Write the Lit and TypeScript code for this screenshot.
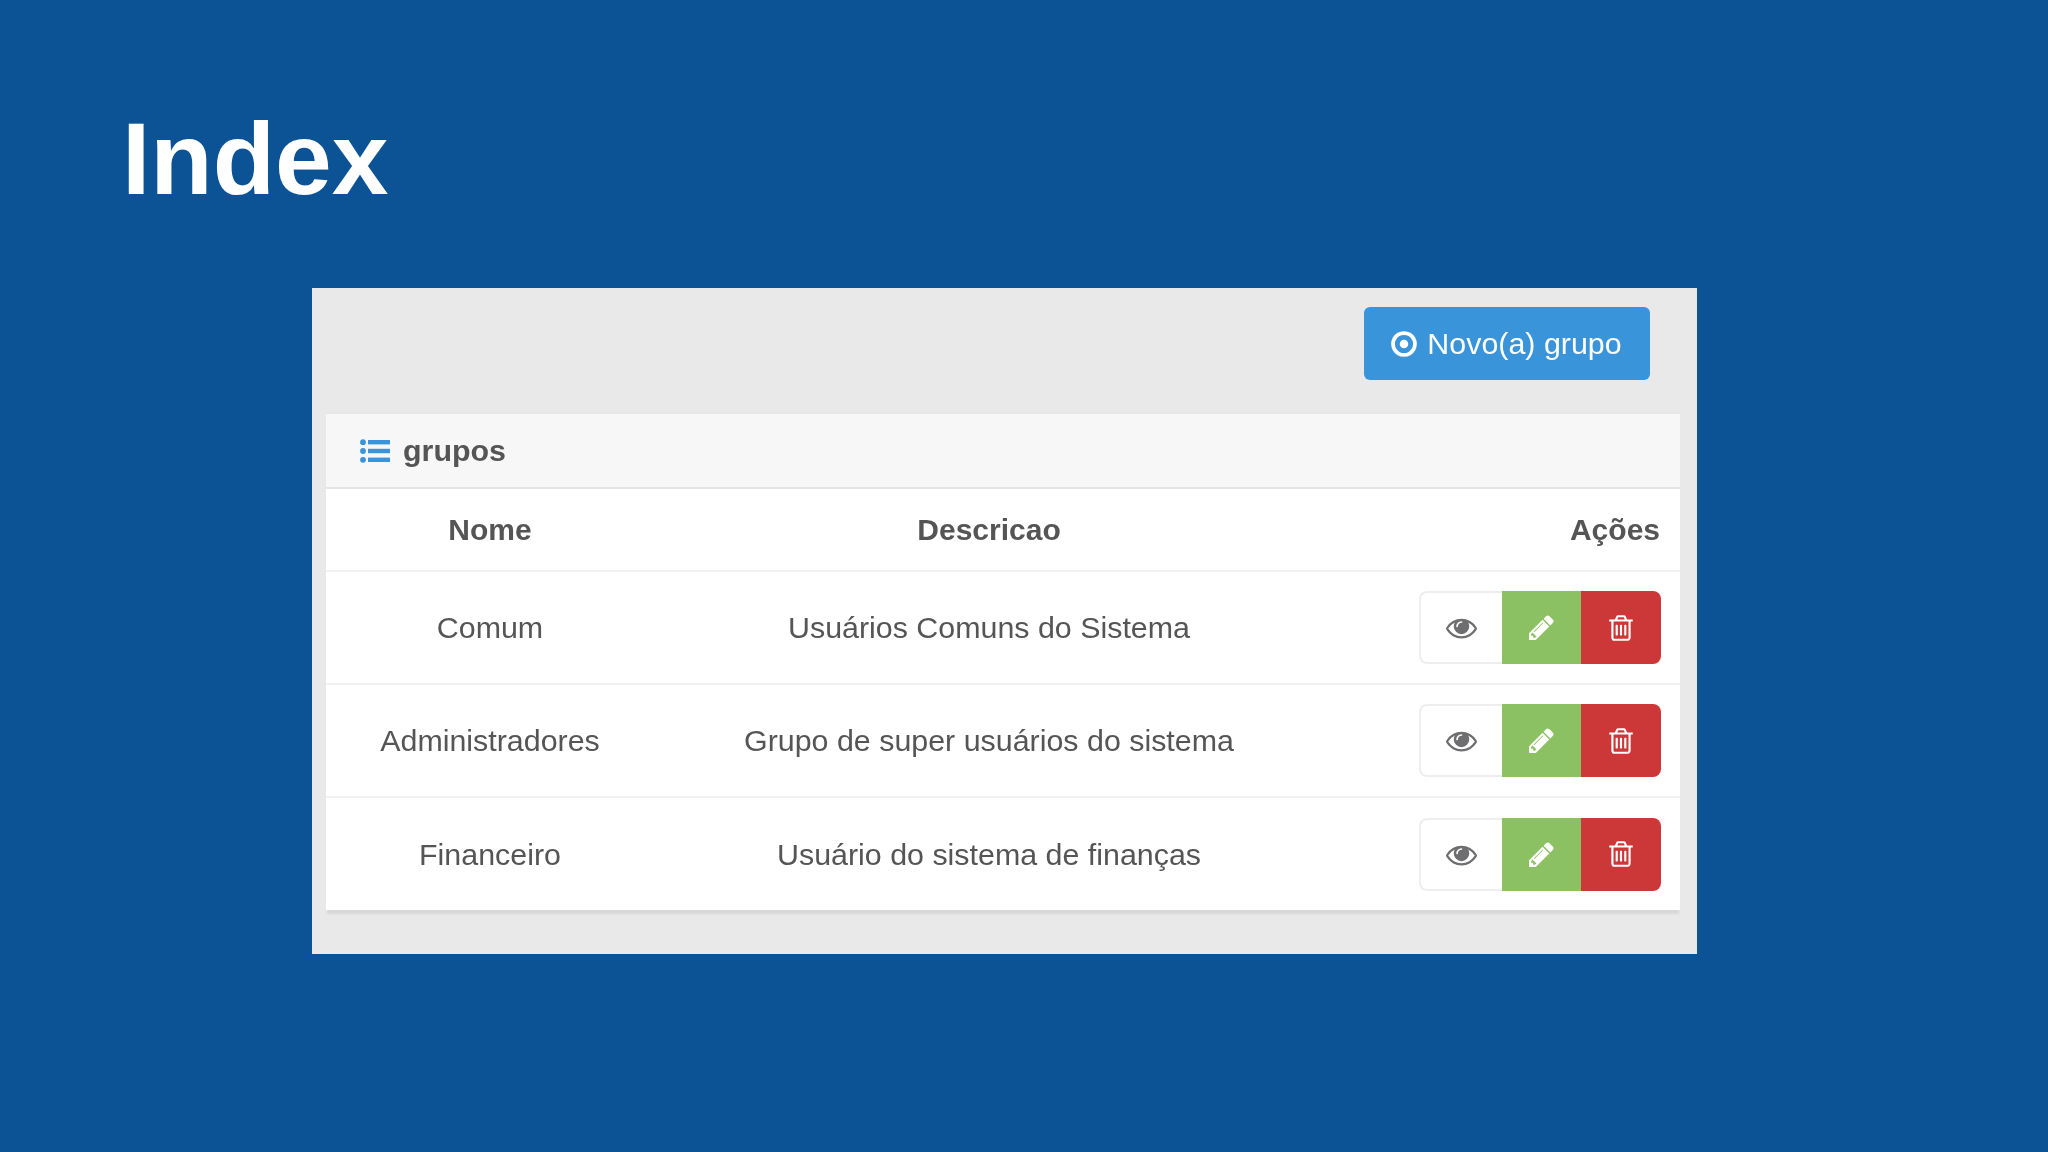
import { LitElement, html, css, svg } from "lit";
import { customElement } from "lit/decorators.js";

const icon = (d: string, cls: string) => html`<svg class="ic ${cls}" viewBox="0 0 1792 1792" fill="currentColor">${svg`<path d=${d}></path>`}</svg>`;
const EYE = "M1664 960q-152-236-381-353 61 104 61 225 0 185-131.500 316.500t-316.500 131.500-316.500-131.500-131.500-316.500q0-121 61-225-229 117-381 353 133 205 333.500 326.500t434.500 121.500 434.500-121.500 333.500-326.500zm-720-384q0-20-14-34t-34-14q-125 0-214.500 89.500t-89.500 214.500q0 20 14 34t34 14 34-14 14-34q0-86 61-147t147-61q20 0 34-14t14-34zm848 384q0 34-20 69-140 230-376.500 368.500t-499.500 138.500-499.500-139-376.500-368q-20-35-20-69t20-69q140-229 376.500-368t499.500-139 499.500 139 376.500 368q20 35 20 69z";
const PENCIL = "M491 1536l91-91-235-235-91 91v107h128v128h107zm523-928q0-22-22-22-10 0-17 7l-542 542q-7 7-7 17 0 22 22 22 10 0 17-7l542-542q7-7 7-17zm-54-192l416 416-832 832h-416v-416zm683 96q0 53-37 90l-166 166-416-416 166-165q36-38 90-38 53 0 91 38l235 234q37 39 37 91z";
const TRASH = "M704 736v576q0 14-9 23t-23 9h-64q-14 0-23-9t-9-23v-576q0-14 9-23t23-9h64q14 0 23 9t9 23zm256 0v576q0 14-9 23t-23 9h-64q-14 0-23-9t-9-23v-576q0-14 9-23t23-9h64q14 0 23 9t9 23zm256 0v576q0 14-9 23t-23 9h-64q-14 0-23-9t-9-23v-576q0-14 9-23t23-9h64q14 0 23 9t9 23zm128 724v-948h-896v948q0 22 7 40.500t14.500 27 10.500 8.500h832q3 0 10.500-8.500t14.500-27 7-40.500zm-672-1076h448l-48-117q-7-9-17-11h-317q-10 2-17 11zm928 32v64q0 14-9 23t-23 9h-96v948q0 83-47 143.500t-113 60.500h-832q-66 0-113-58.500t-47-141.500v-952h-96q-14 0-23-9t-9-23v-64q0-14 9-23t23-9h309l70-167q15-37 54-63t79-26h320q40 0 79 26t54 63l70 167h309q14 0 23 9t9 23z";
const DOT = "M1152 896q0 106-75 181t-181 75-181-75-75-181 75-181 181-75 181 75 75 181zm-256-544q-148 0-273 73t-198 198-73 273 73 273 198 198 273 73 273-73 198-198 73-273-73-273-198-198-273-73zm768 544q0 209-103 385.500t-279.500 279.500-385.500 103-385.500-103-279.500-279.500-103-385.500 103-385.500 279.500-279.500 385.500-103 385.500 103 279.500 279.500 103 385.500z";

const listIcon = html`<svg class="ic ic-list" viewBox="0 0 30 24" fill="currentColor">${svg`
  <circle cx="3" cy="3.2" r="2.9"></circle><circle cx="3" cy="12" r="2.9"></circle><circle cx="3" cy="20.8" r="2.9"></circle>
  <rect x="8" y="1" width="22" height="4.4"></rect><rect x="8" y="9.8" width="22" height="4.4"></rect><rect x="8" y="18.6" width="22" height="4.4"></rect>
`}</svg>`;

const ROWS = [
  ["Comum", "Usuários Comuns do Sistema"],
  ["Administradores", "Grupo de super usuários do sistema"],
  ["Financeiro", "Usuário do sistema de finanças"],
];

@customElement("app-root")
export class AppRoot extends LitElement {
  static styles = css`
    :host { display: block; width: 2048px; height: 1152px; background: #0b5394; overflow: hidden; font-family: "Liberation Sans", Arial, sans-serif; }
    .page { display: flex; flex-direction: column; padding: 0 0 0 122px; }
    h1 { margin: 0; padding-top: 100px; height: 288px; box-sizing: border-box; font-size: 102px; line-height: 118px; font-weight: 700; color: #fff; }
    .card { margin-left: 190px; width: 1385px; height: 666px; box-sizing: border-box; background: #e9e9ea; padding: 19px 17px 0 14px; filter: blur(0.7px); }
    .top { display: flex; justify-content: flex-end; padding-right: 30px; height: 106px; }
    .new { display: flex; align-items: center; justify-content: center; gap: 8px; width: 286px; height: 73px; padding-right: 3px; box-sizing: border-box; background: #3a94d9; color: #fff; border-radius: 6px; font-size: 30.4px; }
    .ic { display: block; flex: none; }
    .ic-dot { width: 30px; height: 30px; }
    .panel { background: #fff; box-shadow: 0 5px 2px -1px #d8d8da; border-top: 1px solid #e6e6e8; }
    .head { display: flex; align-items: center; gap: 13px; height: 75px; box-sizing: border-box; background: #f7f7f8; border-bottom: 2px solid #e4e4e6; padding-left: 34px; color: #555; font-size: 30.4px; font-weight: 700; }
    .ic-list { width: 30px; height: 24px; color: #3a94d9; }
    table { width: 100%; border-collapse: collapse; table-layout: fixed; color: #555; font-size: 30.4px; }
    col.c1 { width: 328px; } col.c2 { width: 670px; }
    th { height: 82px; padding: 0; font-weight: 700; text-align: center; font-size: 30px; box-sizing: border-box; }
    th.act { padding-right: 20px; }
    td { height: 113px; padding: 0; text-align: center; border-top: 2px solid #f1f1f3; box-sizing: border-box; }
    .act { text-align: right; padding-right: 19px; }
    .group { display: inline-flex; vertical-align: middle; height: 73px; }
    .b { display: flex; align-items: center; justify-content: center; box-sizing: border-box; height: 73px; }
    .view { width: 83px; background: #fff; border: 2px solid #eeeeef; border-right: none; border-radius: 8px 0 0 8px; color: #6e6e70; }
    .edit { width: 79px; background: #8cc163; color: #fff; }
    .del { width: 80px; background: #cc3737; color: #fff; border-radius: 0 8px 8px 0; }
    .ic-eye { width: 31px; height: 31px; }
    .ic-pen { width: 29px; height: 29px; }
    .ic-tr { width: 30px; height: 30px; }
  `;

  render() {
    return html`<div class="page">
      <h1>Index</h1>
      <section class="card">
        <div class="top"><div class="new">${icon(DOT, "ic-dot")}<span>Novo(a) grupo</span></div></div>
        <div class="panel">
          <div class="head">${listIcon}<span>grupos</span></div>
          <table>
            <colgroup><col class="c1" /><col class="c2" /><col /></colgroup>
            <thead><tr><th>Nome</th><th>Descricao</th><th class="act">Ações</th></tr></thead>
            <tbody>
              ${ROWS.map(([n, d]) => html`<tr>
                <td>${n}</td><td>${d}</td>
                <td class="act"><div class="group">
                  <div class="b view">${icon(EYE, "ic-eye")}</div>
                  <div class="b edit">${icon(PENCIL, "ic-pen")}</div>
                  <div class="b del">${icon(TRASH, "ic-tr")}</div>
                </div></td>
              </tr>`)}
            </tbody>
          </table>
        </div>
      </section>
    </div>`;
  }
}
